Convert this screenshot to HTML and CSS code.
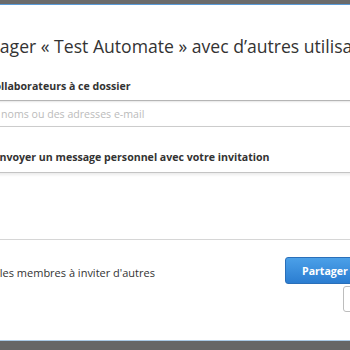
FILE: index.html
```html
<!DOCTYPE html>
<html lang="fr">
<head>
<meta charset="utf-8">
<link rel="stylesheet" href="styles.css">
</head>
<body>
<div class="backdrop-top"></div>
<div class="modal">
  <h1 class="title line"><span class="t-title">Partager « Test Automate » avec d’autres utilisateurs</span></h1>
  <div class="field">
    <label class="label line l-collab">Ajouter des collaborateurs à ce dossier</label>
    <div class="input line"><span class="placeholder">Saisissez des noms ou des adresses e-mail</span></div>
  </div>
  <div class="field field-msg">
    <label class="label line l-msg">Envoyer un message personnel avec votre invitation</label>
    <div class="textarea"></div>
  </div>
  <div class="footer">
    <div class="check line">Autoriser les membres à inviter d'autres</div>
    <div class="buttons">
      <button class="btn btn-primary">Partager</button>
      <button class="btn btn-secondary">Annuler</button>
    </div>
  </div>
</div>
<div class="backdrop-bottom"></div>
</body>
</html>
```
FILE: styles.css
```css
html, body {
  margin: 0;
  padding: 0;
  background: #666666;
  overflow: hidden;
  width: 350px;
  height: 350px;
  font-family: "Open Sans", "Liberation Sans", sans-serif;
  color: #333333;
}
.backdrop-top {
  height: 4px;
  background: #6b6b6b;
}
.modal {
  background: #ffffff;
  border-top: 1px solid #5a9bd8;
  border-bottom: 1px solid #a9c9e6;
  height: 335px;
  overflow: hidden;
  display: flex;
  flex-direction: column;
}
.line {
  white-space: nowrap;
  overflow: visible;
}
.title {
  margin: 29px 0 0 0;
  font-size: 17.6px;
  font-weight: 400;
  line-height: 24px;
  color: #333;
  text-indent: -34px;
}
.field {
  display: flex;
  flex-direction: column;
}
.label {
  font-size: 10.6px;
  font-weight: 700;
  line-height: 18px;
  color: #333;
}
.l-collab {
  margin-top: 19px;
  text-indent: -74.5px;
}
.input {
  margin: 5px -20px 0 -20px;
  height: 25px;
  border: 1px solid #cccccc;
  border-top-color: #b5b5b5;
  box-shadow: inset 0 1px 2px rgba(0,0,0,0.10);
  font-size: 10.6px;
  line-height: 26px;
  color: #bbbbbb;
  text-indent: -46px;
}
.l-msg {
  margin-top: 21px;
  text-indent: -6.5px;
}
.textarea {
  margin: 6px -20px 0 -20px;
  height: 66px;
  border: 1px solid #d6d6d6;
  border-top-color: #c4c4c4;
  box-shadow: inset 0 2px 3px rgba(0,0,0,0.08);
}
.footer {
  display: flex;
  align-items: flex-start;
  justify-content: space-between;
  margin-top: 17px;
}
.check {
  font-size: 11px;
  line-height: 18px;
  margin-top: 7px;
  text-indent: -50.5px;
  color: #333;
}
.buttons {
  display: flex;
  flex-direction: column;
  width: 65px;
  flex: none;
  gap: 2px;
}
.btn {
  font-family: "Open Sans", "Liberation Sans", sans-serif;
  font-size: 10.6px;
  font-weight: 700;
  height: 27px;
  border-radius: 3px;
  padding: 0 0 0 16px;
  text-align: left;
  white-space: nowrap;
  width: 110px;
}
.btn-primary {
  color: #ffffff;
  background: linear-gradient(#4ba0e8, #2b7dd1);
  border: 1px solid #2a6fb9;
}
.btn-secondary {
  margin-left: 58px;
  height: 26px;
  background: #ffffff;
  border: 1px solid #bdbdbd;
  color: #333;
}
.backdrop-bottom {
  height: 20px;
  background: #666666;
}
```
